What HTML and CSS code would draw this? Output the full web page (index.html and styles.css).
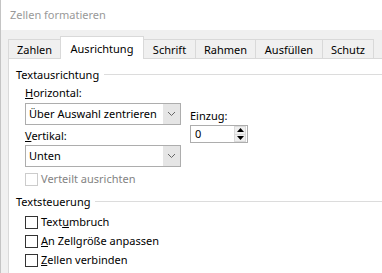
FILE: index.html
```html
<!DOCTYPE html>
<html lang="de">
<head>
    <meta charset="UTF-8">
    <title>Zellen formatieren</title>
    <link rel="stylesheet" href="styles.css">
</head>
<body>
    <div class="window">
        <div class="titlebar">Zellen formatieren</div>
        <div class="dialog">
            <div class="tabs">
                <div class="tab t-zahlen">Zahlen</div>
                <div class="tab active t-ausr">Ausrichtung</div>
                <div class="tab t-schrift">Schrift</div>
                <div class="tab t-rahmen">Rahmen</div>
                <div class="tab t-ausf">Ausfüllen</div>
                <div class="tab t-schutz">Schutz</div>
            </div>
            <div class="panel">
                <div class="group-title"><span>Textausrichtung</span><div class="group-line"></div></div>
                <div class="align-grid">
                    <div class="col-left">
                        <div class="label"><u>H</u>orizontal:</div>
                        <div class="combo">
                            <span class="combo-text">Über Auswahl zentrieren</span>
                            <span class="combo-btn">
                                <svg width="9" height="6" viewBox="0 0 9 6"><path d="M1 1 L4.5 4.5 L8 1" fill="none" stroke="#666" stroke-width="1"/></svg>
                            </span>
                        </div>
                        <div class="label label-gap"><u>V</u>ertikal:</div>
                        <div class="combo">
                            <span class="combo-text">Unten</span>
                            <span class="combo-btn">
                                <svg width="9" height="6" viewBox="0 0 9 6"><path d="M1 1 L4.5 4.5 L8 1" fill="none" stroke="#666" stroke-width="1"/></svg>
                            </span>
                        </div>
                        <div class="check-row disabled first-check"><span class="box"></span>Verteilt ausrichten</div>
                    </div>
                    <div class="col-right">
                        <div class="label">Einzug:</div>
                        <div class="spin">
                            <span class="spin-text">0</span>
                            <span class="spin-btns">
                                <span class="spin-up"><svg width="7" height="4" viewBox="0 0 7 4"><path d="M0 4 L3.5 0 L7 4 Z" fill="#000"/></svg></span>
                                <span class="spin-down"><svg width="7" height="4" viewBox="0 0 7 4"><path d="M0 0 L3.5 4 L7 0 Z" fill="#000"/></svg></span>
                            </span>
                        </div>
                    </div>
                </div>
                <div class="group-title second"><span>Textsteuerung</span><div class="group-line"></div></div>
                <div class="checks">
                    <div class="check-row"><span class="box"></span>Text<u>u</u>mbruch</div>
                    <div class="check-row"><span class="box"></span><u>A</u>n Zellgröße anpassen</div>
                    <div class="check-row"><span class="box"></span><u>Z</u>ellen verbinden</div>
                </div>
            </div>
        </div>
    </div>
</body>
</html>
```

FILE: styles.css
```css
body {
    margin: 0;
    padding: 0;
    font-family: "Noto Sans", "Open Sans", sans-serif;
    font-size: 11px;
    color: #000;
    background: #fff;
    white-space: nowrap;
}
.window {
    width: 382px;
    height: 273px;
    overflow: hidden;
    border-left: 1px solid #c4c4c4;
    box-sizing: border-box;
}
.titlebar {
    height: 30px;
    line-height: 30px;
    padding-left: 9px;
    color: #999;
    background: #fff;
}
.dialog {
    background: #f0f0f0;
    height: 243px;
}
.tabs {
    display: flex;
    align-items: flex-end;
    padding-top: 7px;
    margin-left: 7px;
    height: 21px;
}
.tab {
    height: 18px;
    line-height: 20px;
    text-align: center;
    border: 1px solid #d9d9d9;
    border-bottom: none;
    border-left: none;
    background: #f0f0f0;
    box-sizing: content-box;
}
.tab:first-child {
    border-left: 1px solid #d9d9d9;
}
.t-zahlen { width: 51px; }
.t-ausr { width: 82px; }
.t-schrift { width: 51px; }
.t-rahmen { width: 59px; }
.t-ausf { width: 66px; }
.t-schutz { width: 50px; }
.tab.active {
    height: 22px;
    line-height: 23px;
    background: #fff;
    margin-bottom: -1px;
    position: relative;
    border-left: 1px solid #d9d9d9;
    margin-left: -1px;
}
.panel {
    margin-left: 7px;
    background: #fff;
    border-top: 1px solid #d9d9d9;
    border-left: 1px solid #d9d9d9;
    height: 215px;
    padding: 8px 0 0 7px;
    box-sizing: border-box;
}
.group-title {
    display: flex;
    align-items: center;
    height: 16px;
    line-height: 16px;
}
.group-title span {
    padding-right: 5px;
}
.group-line {
    flex: 1;
    height: 1px;
    background: #dcdcdc;
    margin-top: -1px;
}
.group-title.second {
    margin-top: 7px;
}
.align-grid {
    display: flex;
    padding-left: 9px;
    margin-top: 2px;
}
.col-left {
    width: 156px;
}
.col-right {
    margin-left: 9px;
    padding-top: 23px;
}
.label {
    height: 16px;
    line-height: 16px;
    margin-bottom: 2px;
}
.label-gap {
    margin-top: 3px;
    margin-bottom: 1px;
}
.combo {
    display: flex;
    height: 22px;
    border: 1px solid #adadad;
    box-sizing: border-box;
    background: #fff;
}
.combo-text {
    flex: 1;
    line-height: 20px;
    padding-left: 3px;
}
.combo-btn {
    width: 17px;
    background: #e5e5e5;
    display: flex;
    align-items: center;
    justify-content: center;
}
.col-right .label {
    margin-bottom: 1px;
}
.spin {
    display: flex;
    width: 58px;
    height: 18px;
    border: 1px solid #adadad;
    box-sizing: border-box;
}
.spin-text {
    flex: 1;
    line-height: 16px;
    padding-left: 4px;
}
.spin-btns {
    width: 12px;
    margin: 0 1px 0 0;
    display: flex;
    flex-direction: column;
}
.spin-btns span {
    flex: 1;
    display: flex;
    align-items: center;
    justify-content: center;
    background: #efefef;
    border: 1px solid #dadada;
}
.spin-btns .spin-down {
    border-top: none;
}
.check-row {
    display: flex;
    align-items: center;
    height: 16px;
    line-height: 16px;
}
.box {
    width: 13px;
    height: 13px;
    border: 1px solid #333;
    box-sizing: border-box;
    margin-right: 3px;
    background: #fff;
}
.first-check {
    margin-top: 4px;
}
.check-row.disabled {
    color: #838383;
}
.check-row.disabled .box {
    border-color: #ccc;
}
.checks {
    padding-left: 9px;
    margin-top: 4px;
    display: flex;
    flex-direction: column;
    gap: 3px;
}
```
